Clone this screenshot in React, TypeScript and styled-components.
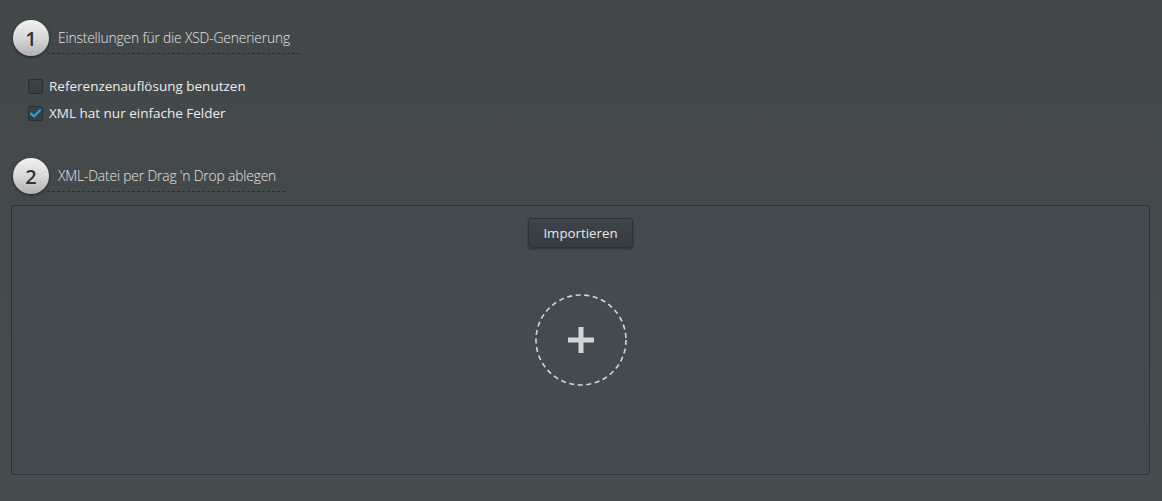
import React, { FunctionComponent } from "react";
import styled, { createGlobalStyle } from "styled-components";

const GlobalStyle = createGlobalStyle`
    html, body {
        margin: 0;
        padding: 0;
        height: 100%;
    }
    body {
        background: linear-gradient(to bottom, #42484a 0%, #464d4f 100%);
        font-family: 'Open Sans', 'Liberation Sans', sans-serif;
        color: #e6e6e6;
    }
    #root {
        min-height: 100vh;
    }
`;

const Page = styled.div`
    display: flex;
    flex-direction: column;
    padding: 20px 12px 26px 11px;
    box-sizing: border-box;
    height: 501px;
`;

const Section = styled.section<{ $gap?: number }>`
    display: flex;
    flex-direction: column;
    margin-bottom: ${(p) => p.$gap ?? 0}px;
`;

const StepHeader = styled.div`
    display: flex;
    align-items: flex-start;
    padding-left: 2px;
`;

const StepBadge = styled.div`
    width: 36px;
    height: 36px;
    border-radius: 50%;
    background: linear-gradient(to bottom, #f2f2f2 0%, #d8d8d8 50%, #b0b0b0 100%);
    box-shadow: 0 1px 3px rgba(0, 0, 0, 0.55);
    display: flex;
    align-items: center;
    justify-content: center;
    font-size: 20px;
    font-weight: 600;
    color: #333333;
    flex-shrink: 0;
    position: relative;
    z-index: 1;
`;

const StepTitle = styled.div<{ $width: number }>`
    margin: 9px 0 0 -2px;
    width: ${(p) => p.$width}px;
    padding: 0 0 6px 11px;
    border-bottom: 1px dashed #2a2f31;
    font-size: 13.8px;
    font-weight: 300;
    color: #e4e4e4;
    letter-spacing: -0.15px;
    line-height: 18px;
`;

const Options = styled.div`
    display: flex;
    flex-direction: column;
    gap: 9px;
    padding: 21px 0 0 17px;
`;

const OptionRow = styled.label`
    display: flex;
    align-items: center;
    gap: 6px;
    font-size: 13.5px;
    font-weight: 400;
    color: #ececec;
    line-height: 18px;
    cursor: pointer;
`;

const Box = styled.span`
    width: 15px;
    height: 15px;
    border-radius: 2px;
    background: linear-gradient(to bottom, #3c4347, #363c40);
    border: 1px solid #2a2f32;
    box-sizing: border-box;
    display: flex;
    align-items: center;
    justify-content: center;
`;

const DropZone = styled.div`
    flex: 1;
    margin-top: 11px;
    border: 1px solid #2d3336;
    border-radius: 3px;
    background: #434a50;
    display: flex;
    flex-direction: column;
    align-items: center;
    padding-top: 12px;
`;

const ImportButton = styled.button`
    font-family: 'Open Sans', 'Liberation Sans', sans-serif;
    font-size: 13.3px;
    color: #e8e8e8;
    height: 30px;
    padding: 0 14px;
    border-radius: 3px;
    border: 1px solid #2c3236;
    background: linear-gradient(to bottom, #3e454a 0%, #353b40 100%);
    box-shadow: 0 1px 2px rgba(0, 0, 0, 0.35);
    cursor: pointer;
`;

const AddTarget = styled.div`
    margin-top: 46px;
    width: 92px;
    height: 92px;
    display: flex;
    align-items: center;
    justify-content: center;
`;

interface OptionProps {
    label: string;
    checked?: boolean;
}

const Option: FunctionComponent<OptionProps> = ({ label, checked }) => (
    <OptionRow>
        <Box>
            {checked && (
                <svg width="11" height="9" viewBox="0 0 11 9">
                    <path d="M1 4.6 L4 7.4 L10 1.2" stroke="#1fa4e2" strokeWidth="2.2" fill="none" strokeLinecap="round" strokeLinejoin="round" />
                </svg>
            )}
        </Box>
        {label}
    </OptionRow>
);

const App: FunctionComponent = () => (
    <>
        <GlobalStyle />
        <Page>
            <Section $gap={36}>
                <StepHeader>
                    <StepBadge>1</StepBadge>
                    <StepTitle $width={242}>Einstellungen für die XSD-Generierung</StepTitle>
                </StepHeader>
                <Options>
                    <Option label="Referenzenauflösung benutzen" />
                    <Option label="XML hat nur einfache Felder" checked />
                </Options>
            </Section>
            <StepHeader>
                <StepBadge>2</StepBadge>
                <StepTitle $width={227}>XML-Datei per Drag 'n Drop ablegen</StepTitle>
            </StepHeader>
            <DropZone>
                <ImportButton>Importieren</ImportButton>
                <AddTarget>
                    <svg width="92" height="92" viewBox="0 0 92 92">
                        <circle cx="46" cy="46" r="45" fill="none" stroke="#d6d6d6" strokeWidth="1.6" strokeDasharray="5 3.6" />
                        <rect x="33" y="43.5" width="26" height="5" fill="#d4d4d4" />
                        <rect x="43.5" y="33" width="5" height="26" fill="#d4d4d4" />
                    </svg>
                </AddTarget>
            </DropZone>
        </Page>
    </>
);

export default App;
